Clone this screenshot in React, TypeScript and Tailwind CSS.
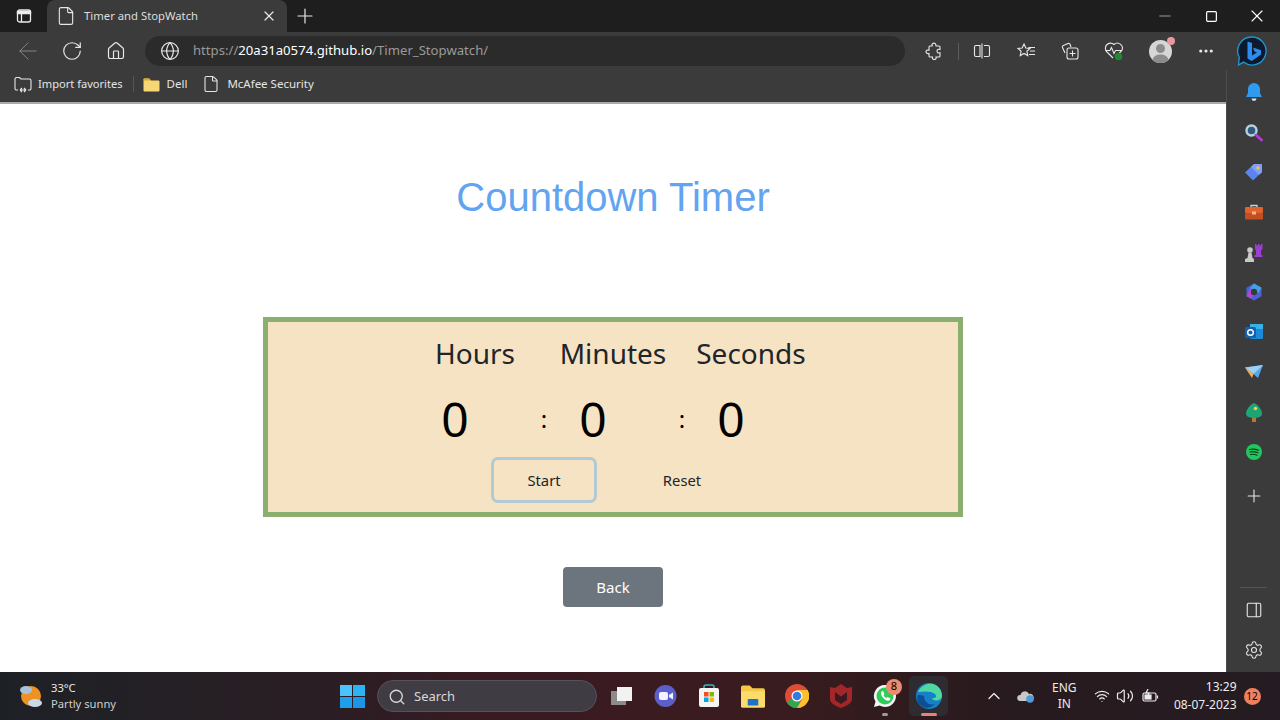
import {
  ArrowLeft,
  ChevronUp,
  Ellipsis,
  File,
  Globe,
  House,
  Minus,
  PanelRight,
  Plus,
  RotateCw,
  Search,
  Settings,
  Square,
  Volume2,
  Wifi,
  X,
} from "lucide-react";

function BingIcon() {
  return (
    <svg width="32" height="32" viewBox="0 0 32 32">
      <path d="M16 2a14 14 0 1 1-8.500 25.100L2.500 30l.8-7.500A14 14 0 0 1 16 2z" fill="#0e1a2c" stroke="#1b9ad6" strokeWidth="1.300" />
      <path d="M11.500 6.500l4.500 1.500v12.500l5-2.900-2.500-1.200-1.600-4 8.100 2.900v4.200L15.800 26l-4.300-2.500z" fill="#2c8cf2" />
    </svg>
  );
}

function TabsIcon() {
  return (
    <svg width="16" height="16" viewBox="0 0 16 16" fill="none" stroke="#ececec" strokeWidth="1.300">
      <rect x="1.500" y="2" width="13" height="12" rx="2" />
      <path d="M1.500 3.500h13v2h-13z" fill="#ececec" />
      <path d="M5.500 5v9" />
    </svg>
  );
}

function PuzzleIcon() {
  return (
    <svg width="18" height="18" viewBox="0 0 18 18" fill="none" stroke="#e8e8e8" strokeWidth="1.100">
      <path d="M7 2.500a2 2 0 0 1 3.800 0c.2.700 0 1.200.2 1.500h3a1 1 0 0 1 1 1v2.500c-1.700-.6-3 .3-3 1.600 0 1.400 1.300 2.300 3 1.700V14a1 1 0 0 1-1 1h-3c.5 1.700-.4 2.500-1.700 2.500S7.100 16.700 7.500 15H5a1 1 0 0 1-1-1v-2.500C2.300 12 1 11.100 1 9.800s1.300-2.200 3-1.600V5a1 1 0 0 1 1-1h2.200c.1-.4-.3-.8-.2-1.500z" />
    </svg>
  );
}

function SplitIcon() {
  return (
    <svg width="18" height="18" viewBox="0 0 18 18" fill="none" stroke="#e8e8e8" strokeWidth="1.100">
      <path d="M7 3.500H3A1.500 1.500 0 0 0 1.500 5v8A1.500 1.500 0 0 0 3 14.500h4z" />
      <path d="M9 1.500v15M11 3.500h4A1.500 1.500 0 0 1 16.500 5v8a1.500 1.500 0 0 1-1.500 1.500h-4" />
    </svg>
  );
}

function FolderIcon() {
  return (
    <svg width="17" height="15" viewBox="0 0 17 15">
      <path d="M0.500 2.500a1 1 0 0 1 1-1h4.500l2 2h7.500a1 1 0 0 1 1 1v9a1 1 0 0 1-1 1h-14a1 1 0 0 1-1-1z" fill="#f7d774" />
      <path d="M0.500 2.500a1 1 0 0 1 1-1h4.500l2 2H0.500z" fill="#e0a92e" />
    </svg>
  );
}

function ImportIcon() {
  return (
    <svg width="18" height="17" viewBox="0 0 18 17" fill="none" stroke="#e8e8e8" strokeWidth="1.100">
      <path d="M4 14H2.500A1.500 1.500 0 0 1 1 12.500V3a1.500 1.500 0 0 1 1.500-1.500h3l1.500 1.500h8.500A1.500 1.500 0 0 1 17 4.500v8a1.500 1.500 0 0 1-1.500 1.500H14" />
      <path d="M6 14h6M6 14l2-2M6 14l2 2M12 14l-2-2M12 14l-2 2" />
    </svg>
  );
}

function FavoritesIcon() {
  return (
    <svg width="20" height="20" viewBox="0 0 20 20" fill="none" stroke="#e8e8e8" strokeWidth="1.100">
      <path d="M8 3l1.800 4 4.200.4-3.100 2.900.9 4.300L8 12.500l-3.800 2.100.9-4.300L2 7.400l4.200-.4z" />
      <path d="M12.500 6.500H19M14 10h5M13 13.500h6" />
    </svg>
  );
}

function CollectionsIcon() {
  return (
    <svg width="20" height="20" viewBox="0 0 20 20" fill="none" stroke="#e8e8e8" strokeWidth="1.100">
      <path d="M5 12L2.500 6.500a1.500 1.500 0 0 1 .8-2L8 2.500a1.500 1.500 0 0 1 2 .8L11 6" />
      <rect x="7" y="7" width="11" height="11" rx="2" />
      <path d="M12.500 9.500v6M9.500 12.500h6" />
    </svg>
  );
}

function HealthIcon() {
  return (
    <svg width="20" height="20" viewBox="0 0 20 20" fill="none">
      <path d="M3 11a5 5 0 0 1 7-7.500A5 5 0 0 1 17.500 10L14 13.500M3 11l6 6" stroke="#e8e8e8" strokeWidth="1.100" />
      <path d="M1.500 9.500H6l1.500-3 2.500 6 1.500-3H18" stroke="#e8e8e8" strokeWidth="1.100" />
      <circle cx="14.500" cy="15.500" r="3.800" fill="#1f8a2d" />
    </svg>
  );
}

function Avatar() {
  return (
    <div className="relative h-[23px] w-[23px]">
      <svg width="23" height="23" viewBox="0 0 23 23">
        <circle cx="11.500" cy="11.500" r="11.500" fill="#d8d6d4" />
        <circle cx="11.500" cy="8.500" r="4.500" fill="#8c8c8c" />
        <path d="M3.500 20c1-4 4-5.500 8-5.500s7 1.500 8 5.500a11.500 11.500 0 0 1-16 0z" fill="#8c8c8c" />
      </svg>
      <span className="absolute right-[-3px] top-[-3px] h-[8px] w-[8px] rounded-full bg-[#e89aa0]" />
    </div>
  );
}

function ToolbarSlot({ children, w = "w-[44px]" }: { children: React.ReactNode; w?: string }) {
  return <div className={`flex ${w} items-center justify-center`}>{children}</div>;
}

function TitleBar() {
  return (
    <div className="flex h-[32px] items-end bg-[#1e1e1e] text-[#e8e8e8]">
      <div className="flex h-[32px] w-[47px] items-center justify-center">
        <TabsIcon />
      </div>
      <div className="flex h-[32px] w-[240px] items-center rounded-t-[8px] bg-[#3b3b3b] pl-[9px] pr-[10px]">
        <File size={20} strokeWidth={1.1} absoluteStrokeWidth className="text-[#e8e8e8]" />
        <span className="ml-[8px] flex-1 text-[11.300px] text-[#dddddd]">Timer and StopWatch</span>
        <X size={16} strokeWidth={1.2} absoluteStrokeWidth />
      </div>
      <div className="flex h-[32px] w-[36px] items-center justify-center">
        <Plus size={24} strokeWidth={1.2} absoluteStrokeWidth />
      </div>
      <div className="flex-1" />
      <div className="flex h-[32px] w-[46px] items-center justify-center text-[#9a9a9a]">
        <Minus size={18} strokeWidth={1} absoluteStrokeWidth />
      </div>
      <div className="flex h-[32px] w-[46px] items-center justify-center text-white">
        <Square size={13} strokeWidth={1.2} absoluteStrokeWidth />
      </div>
      <div className="flex h-[32px] w-[46px] items-center justify-center text-white">
        <X size={20} strokeWidth={1.1} absoluteStrokeWidth />
      </div>
    </div>
  );
}

function AddressBar() {
  return (
    <div className="flex h-[38px] items-center bg-[#3b3b3b] text-[#e8e8e8]">
      <div className="flex w-[145px] items-center pl-[14px]">
        <ArrowLeft size={28} strokeWidth={1} absoluteStrokeWidth className="text-[#858585]" />
        <RotateCw size={22} strokeWidth={1.2} absoluteStrokeWidth className="ml-[19px]" />
        <House size={20} strokeWidth={1.2} absoluteStrokeWidth className="ml-[23px]" />
      </div>
      <div className="flex h-[30px] w-[760px] items-center rounded-full bg-[#2b2b2b] pl-[15px] text-[13.150px]">
        <Globe size={20} strokeWidth={1.2} absoluteStrokeWidth />
        <span className="ml-[13px] text-[#9a9a9a]">
          https://<span className="text-white">20a31a0574.github.io</span>/Timer_Stopwatch/
        </span>
      </div>
      <div className="flex flex-1 items-center pl-[7px]">
        <ToolbarSlot>
          <PuzzleIcon />
        </ToolbarSlot>
        <div className="ml-[2px] h-[17px] w-px bg-[#5c5c5c]" />
        <ToolbarSlot w="ml-[1px] w-[44px]">
          <SplitIcon />
        </ToolbarSlot>
        <ToolbarSlot>
          <FavoritesIcon />
        </ToolbarSlot>
        <ToolbarSlot>
          <CollectionsIcon />
        </ToolbarSlot>
        <ToolbarSlot>
          <HealthIcon />
        </ToolbarSlot>
        <ToolbarSlot w="w-[48px]">
          <Avatar />
        </ToolbarSlot>
        <ToolbarSlot>
          <Ellipsis size={18} strokeWidth={2.2} />
        </ToolbarSlot>
        <ToolbarSlot w="w-[48px]">
          <BingIcon />
        </ToolbarSlot>
      </div>
    </div>
  );
}

function FavoritesBar() {
  return (
    <div className="flex h-[34px] items-center border-b-2 border-[#a9a9a9] bg-[#3b3b3b] pb-[4px] pl-[14px] text-[11.500px] text-[#e4e4e4]">
      <ImportIcon />
      <span className="ml-[6px] text-[11.100px]">Import favorites</span>
      <div className="ml-[10px] h-[16px] w-px bg-[#555555]" />
      <div className="ml-[9px]">
        <FolderIcon />
      </div>
      <span className="ml-[7px]">Dell</span>
      <File size={18} strokeWidth={1.1} absoluteStrokeWidth className="ml-[15px]" />
      <span className="ml-[7px]">McAfee Security</span>
    </div>
  );
}

function Timer() {
  return (
    <div className="mt-[96px] flex h-[200px] w-[700px] flex-col items-center border-[5px] border-[#8baf6e] bg-[#f5e3c4] pt-[12px] text-[#212529]">
      <div className="grid w-[414px] grid-cols-3 text-center text-[28px] leading-[38px]">
        <span>Hours</span>
        <span>Minutes</span>
        <span>Seconds</span>
      </div>
      <div className="mt-[16px] flex w-[414px] items-center pl-[24px] text-black">
        <span className="w-[50px] text-center text-[48px] leading-[62px]">0</span>
        <span className="ml-[59px] w-[10px] text-center text-[24px]">:</span>
        <span className="ml-[19px] w-[50px] text-center text-[48px] leading-[62px]">0</span>
        <span className="ml-[59px] w-[10px] text-center text-[24px]">:</span>
        <span className="ml-[19px] w-[50px] text-center text-[48px] leading-[62px]">0</span>
      </div>
      <div className="mt-[7px] flex gap-[32px] text-[14.800px]">
        <button className="h-[46px] w-[106px] rounded-[7px] border-[3px] border-[#b3c9d3] text-center">Start</button>
        <button className="h-[46px] w-[106px] text-center">Reset</button>
      </div>
    </div>
  );
}

function SideIcon({ children }: { children: React.ReactNode }) {
  return <div className="flex h-[40px] items-center justify-center">{children}</div>;
}

function Sidebar() {
  return (
    <div className="flex w-[54px] flex-col border-l border-[#4c4c4c] bg-[#3b3b3b] pb-[2px] pt-[2px] text-[#e8e8e8]">
      <SideIcon>
        <svg width="18" height="20" viewBox="0 0 18 20">
          <path d="M9 1a6 6 0 0 1 6 6v4l2 4H1l2-4V7a6 6 0 0 1 6-6z" fill="#2f9bf0" />
          <path d="M6.500 16.500h5a2.500 2.500 0 0 1-5 0z" fill="#cfe6f8" />
        </svg>
      </SideIcon>
      <SideIcon>
        <svg width="19" height="19" viewBox="0 0 19 19">
          <circle cx="7.500" cy="7.500" r="5" fill="#2d5d7a" stroke="#b6d2dc" strokeWidth="2.400" />
          <path d="M12 12l5.500 5" stroke="#b03ad0" strokeWidth="3" strokeLinecap="round" />
        </svg>
      </SideIcon>
      <SideIcon>
        <svg width="19" height="18" viewBox="0 0 19 18">
          <path d="M10 1h7a1 1 0 0 1 1 1v7l-9 8.500-8-8z" fill="#5b84f0" />
          <path d="M10 1h7a1 1 0 0 1 1 1v7l-3 3-8-8z" fill="#7fa0f8" />
          <circle cx="14" cy="5" r="1.800" fill="#f3c14b" />
        </svg>
      </SideIcon>
      <SideIcon>
        <svg width="18" height="16" viewBox="0 0 18 16">
          <path d="M6 3V1.500h6V3" fill="none" stroke="#d8cfc8" strokeWidth="1.300" />
          <rect x="0" y="3" width="18" height="6" rx="1" fill="#e2622d" />
          <rect x="0" y="9" width="18" height="6.500" rx="1" fill="#c24e22" />
          <rect x="7" y="7.500" width="4" height="3" fill="#f5b895" />
        </svg>
      </SideIcon>
      <SideIcon>
        <svg width="19" height="19" viewBox="0 0 19 19">
          <path d="M11 1h1.500v1.500h1.500V1h1.500v1.500H17V1h1.500v5l-1.500 1.500V12h1.500v2H10.500v-2H12V7.500L11 6z" fill="#9a3fd0" />
          <circle cx="6" cy="7" r="2.800" fill="#c8c8c8" />
          <path d="M4.500 9.500h3l1 5.500 1.500 1v3H1v-3l2.500-1z" fill="#c8c8c8" />
        </svg>
      </SideIcon>
      <SideIcon>
        <svg width="18" height="18" viewBox="0 0 18 18">
          <path d="M9 0.500l7.500 4.300v8.400L9 17.500 1.500 13.200V4.800z" fill="#4d62d8" />
          <path d="M9 0.500l7.500 4.300-3 5.200L5 5.200z" fill="#3fa2e8" />
          <path d="M1.500 13.200L5 5.200l4 4.800-2.500 5.500z" fill="#b04ad6" />
          <circle cx="9" cy="9" r="3.200" fill="#3b3b3b" />
        </svg>
      </SideIcon>
      <SideIcon>
        <svg width="18" height="18" viewBox="0 0 18 18">
          <rect x="5" y="1" width="13" height="15" rx="1.500" fill="#1c8ad8" />
          <rect x="5" y="1" width="13" height="5" fill="#38b0ea" />
          <rect x="0" y="4" width="11" height="11" rx="1.500" fill="#0f63b6" />
          <circle cx="5.500" cy="9.500" r="2.800" fill="none" stroke="#ffffff" strokeWidth="1.400" />
        </svg>
      </SideIcon>
      <SideIcon>
        <svg width="18" height="14" viewBox="0 0 18 14">
          <path d="M0 2.500l18-2.500-5 13-4.500-4z" fill="#58a5f0" />
          <path d="M0 2.500l8.500 6.500L7 13z" fill="#f5b04c" />
          <path d="M0 2.500l18-2.500-9.500 9z" fill="#9ed0f5" />
        </svg>
      </SideIcon>
      <SideIcon>
        <svg width="16" height="19" viewBox="0 0 16 19">
          <rect x="6" y="13" width="4" height="6" fill="#b57a2a" />
          <path d="M8 0c4 1.500 8 7 8 10.500S12 15 8 15 0 14 0 10.500 4 1.500 8 0z" fill="#1fa474" />
          <circle cx="9.500" cy="5.500" r="1.800" fill="#f3d04b" />
        </svg>
      </SideIcon>
      <SideIcon>
        <svg width="16" height="16" viewBox="0 0 16 16">
          <circle cx="8" cy="8" r="8" fill="#1fc75c" />
          <path d="M3.500 5.500c3-.8 6-.6 9 .8M4 8c2.600-.6 5.200-.4 7.800.8M4.500 10.500c2.200-.5 4.400-.3 6.500.7" fill="none" stroke="#123b20" strokeWidth="1.200" strokeLinecap="round" />
        </svg>
      </SideIcon>
      <div className="mt-[4px]">
        <SideIcon>
          <Plus size={20} strokeWidth={1.1} absoluteStrokeWidth />
        </SideIcon>
      </div>
      <div className="flex-1" />
      <div className="mx-[13px] mb-[2px] h-px bg-[#555555]" />
      <SideIcon>
        <PanelRight size={18} strokeWidth={1.1} absoluteStrokeWidth />
      </SideIcon>
      <SideIcon>
        <Settings size={20} strokeWidth={1.1} absoluteStrokeWidth />
      </SideIcon>
    </div>
  );
}

function Taskbar() {
  return (
    <div className="flex h-[48px] items-center bg-[linear-gradient(90deg,#1d2126_0%,#2a1e24_25%,#3a1a22_40%,#3a1c1f_60%,#281a1e_78%,#241c22_100%)] text-[#ececec]">
      <div className="flex w-[340px] items-center pl-[18px]">
        <svg width="26" height="26" viewBox="0 0 26 26">
          <circle cx="13" cy="13" r="10" fill="#ee9224" />
          <ellipse cx="8" cy="7" rx="6" ry="4" fill="#a9c3dc" />
          <ellipse cx="17" cy="20" rx="7" ry="4" fill="#c8daea" />
        </svg>
        <div className="ml-[7px] text-[11.200px] leading-[16px]">
          <div>33°C</div>
          <div className="text-[#cfcfcf]">Partly sunny</div>
        </div>
      </div>
      <div className="grid h-[23px] w-[25px] grid-cols-2 gap-[1px]">
        <span className="bg-[#4cc2ff]" />
        <span className="bg-[#2bb3f5]" />
        <span className="bg-[#1d9fec]" />
        <span className="bg-[#1b95e8]" />
      </div>
      <div className="ml-[12px] flex h-[32px] w-[220px] items-center rounded-full border border-[#55505a] bg-[#403c44] pl-[10px] pt-[1px] text-[13px] text-[#d8d8d8]">
        <Search size={18} strokeWidth={1.3} absoluteStrokeWidth />
        <span className="ml-[8px]">Search</span>
      </div>
      <div className="ml-[13px] flex w-[352px] items-center">
        <div className="relative flex w-[24px] justify-center">
          <svg width="22" height="20" viewBox="0 0 22 20">
            <rect x="0" y="5" width="15" height="14" fill="#8c8c8c" />
            <rect x="6" y="1" width="15" height="14" fill="#f2f2f2" />
          </svg>
        </div>
        <div className="ml-[19px] flex w-[24px] justify-center">
          <svg width="23" height="24" viewBox="0 0 23 24">
            <circle cx="11.500" cy="12" r="11" fill="#5b5fc7" />
            <rect x="5" y="8" width="9" height="8" rx="2" fill="#f2f2ff" />
            <path d="M15 11l4-2.500v7L15 13z" fill="#f2f2ff" />
          </svg>
        </div>
        <div className="ml-[20px] flex w-[24px] justify-center">
          <svg width="22" height="24" viewBox="0 0 22 24">
            <path d="M6 5V3a2 2 0 0 1 2-2h6a2 2 0 0 1 2 2v2" fill="none" stroke="#35b8c9" strokeWidth="1.500" />
            <rect x="1" y="4" width="20" height="19" rx="2" fill="#f4f4f4" />
            <rect x="6" y="8" width="4.500" height="4.500" fill="#f25022" />
            <rect x="11.500" y="8" width="4.500" height="4.500" fill="#7fba00" />
            <rect x="6" y="13.500" width="4.500" height="4.500" fill="#00a4ef" />
            <rect x="11.500" y="13.500" width="4.500" height="4.500" fill="#ffb900" />
          </svg>
        </div>
        <div className="ml-[20px] flex w-[24px] justify-center">
          <svg width="25" height="23" viewBox="0 0 25 23">
            <path d="M0 2a2 2 0 0 1 2-2h7l3 3h11a2 2 0 0 1 2 2v16a2 2 0 0 1-2 2H2a2 2 0 0 1-2-2z" fill="#f6c945" />
            <rect x="0" y="6" width="25" height="17" rx="1" fill="#fadb6b" />
            <rect x="7" y="14" width="11" height="7" rx="1" fill="#1a73c8" />
          </svg>
        </div>
        <div className="ml-[20px] flex w-[24px] justify-center">
          <svg width="24" height="24" viewBox="0 0 24 24">
            <circle cx="12" cy="12" r="12" fill="#dd4b39" />
            <path d="M12 12L1.600 18A12 12 0 0 0 12 24c1.700 0 3-.3 4.500-1z" fill="#2fa84f" />
            <path d="M12 6h10.600A12 12 0 0 1 12 24l5.200-9z" fill="#fbc02d" />
            <circle cx="12" cy="12" r="5.500" fill="#ffffff" />
            <circle cx="12" cy="12" r="4.300" fill="#2f7de0" />
          </svg>
        </div>
        <div className="ml-[20px] flex w-[24px] justify-center">
          <svg width="22" height="24" viewBox="0 0 22 24">
            <path d="M0 3l5 1 6-4 6 4 5-1v12c0 4-5 7-11 9C5 22 0 19 0 15z" fill="#a3262a" />
            <path d="M5 8l6 4.500L17 8v8l-6 4-6-4z" fill="#3a1a1e" />
          </svg>
        </div>
        <div className="relative ml-[20px] flex w-[24px] justify-center">
          <svg width="24" height="25" viewBox="0 0 24 25">
            <path d="M12 1a11 11 0 0 1 0 22c-2 0-3.800-.5-5.400-1.400L1 23l1.500-5.400A11 11 0 0 1 12 1z" fill="#f5f5f5" />
            <circle cx="12" cy="12" r="8.500" fill="#2ecc58" />
            <path d="M8.500 7.500l1.500-.5 1.500 3-1 1c.6 1.400 1.600 2.400 3 3l1-1 3 1.500-.5 1.500c-1 1-3 1-5-.5s-4-4-4-6c0-1 .3-1.500.5-2z" fill="#ffffff" />
          </svg>
          <span className="absolute right-[-5px] top-[-5px] flex h-[16px] w-[16px] items-center justify-center rounded-full bg-[#ee8a6d] text-[11px] text-black">8</span>
          <span className="absolute bottom-[-7px] h-[3px] w-[6px] rounded-full bg-[#9c9c9c]" />
        </div>
        <div className="relative ml-[12px] flex h-[40px] w-[39px] items-center justify-center rounded-[5px] bg-[#2e2c30]">
          <svg width="26" height="26" viewBox="0 0 26 26">
            <circle cx="13" cy="13" r="13" fill="#1580c8" />
            <path d="M2 9C5 2 12 0 17 1c5 1 9 6 9 12 0 3-3 4.500-6 4.500-2 0-4-1-4-2.500 4 1 5-2 3-4-3-3-10-3-17-2z" fill="#4fd8a0" />
            <path d="M8 13c0 6 5 10 11 8-3 3-8 5-12 3-5-2-7-8-5-12 2 0 4 0 6 1z" fill="#0c4f94" />
          </svg>
          <span className="absolute bottom-[0px] h-[3px] w-[16px] rounded-full bg-[#ee7f7f]" />
        </div>
      </div>
      <div className="flex flex-1 items-center text-[12px]">
        <ChevronUp size={20} strokeWidth={1.3} absoluteStrokeWidth className="ml-[22px]" />
        <svg width="18" height="14" viewBox="0 0 18 14" className="ml-[13px]">
          <path d="M3 12a3 3 0 0 1 .5-6 4.500 4.500 0 0 1 8.500-1 3.500 3.500 0 0 1 2 7z" fill="#c8c8c8" />
          <circle cx="13" cy="10" r="3.800" fill="#4f9ad8" />
        </svg>
        <div className="ml-[17px] text-center leading-[16px]">
          <div>ENG</div>
          <div>IN</div>
        </div>
        <Wifi size={16} strokeWidth={1.2} absoluteStrokeWidth className="ml-[17px]" />
        <Volume2 size={18} strokeWidth={1.2} absoluteStrokeWidth className="ml-[6px]" />
        <svg width="17" height="14" viewBox="0 0 17 14" fill="none" stroke="#ececec" strokeWidth="1.200" className="ml-[8px]">
          <rect x="1" y="4" width="13" height="8" rx="1.500" />
          <rect x="3" y="6" width="6" height="4" fill="#ececec" />
          <path d="M15.500 6.500v3M6 0L4 4h3L5 8" />
        </svg>
        <div className="ml-[12px] w-[66px] text-right leading-[18px]">
          <div>13:29</div>
          <div>08-07-2023</div>
        </div>
        <span className="ml-[7px] flex h-[17px] w-[17px] items-center justify-center rounded-full bg-[#ee7f5f] text-[10px] text-black">12</span>
      </div>
    </div>
  );
}

export default function App() {
  return (
    <div className="flex h-[720px] w-[1280px] flex-col overflow-hidden bg-white font-['Noto_Sans',sans-serif]">
      <TitleBar />
      <AddressBar />
      <div className="flex flex-1">
        <div className="flex flex-1 flex-col">
          <FavoritesBar />
          <main className="flex flex-1 flex-col items-center pt-[69px]">
            <h1 className="font-['Liberation_Sans',sans-serif] text-[40px] leading-[48px] text-[#63a4f0]">Countdown Timer</h1>
            <Timer />
            <button className="mt-[50px] h-[40px] w-[100px] rounded-[4px] bg-[#6c757d] text-[15px] text-white">Back</button>
          </main>
        </div>
        <Sidebar />
      </div>
      <Taskbar />
    </div>
  );
}
